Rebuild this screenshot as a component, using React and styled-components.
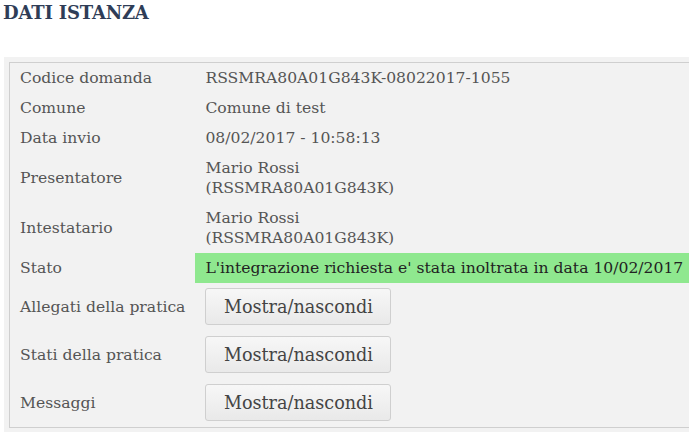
import styled, { createGlobalStyle } from 'styled-components';

const Global = createGlobalStyle`
    body {
        margin: 0;
        background: #fff;
        font-family: "DejaVu Serif", "Liberation Serif", serif;
        overflow: hidden;
    }
`;

const Page = styled.div`
    padding: 2px 0 0 3px;
    width: 689px;
    overflow: hidden;
`;

const Title = styled.h2`
    margin: 0;
    font-size: 18px;
    line-height: 22px;
    font-weight: bold;
    color: #2f3d57;
    letter-spacing: -0.2px;
`;

const Panel = styled.div`
    margin-top: 33px;
    margin-left: 1px;
    margin-right: -60px;
    background: #f2f2f2;
    padding: 5px 0 4px 5px;
`;

const Table = styled.table`
    border-collapse: collapse;
    border: 1px solid #cfcfcf;
    width: 100%;
    font-size: 15.6px;
    color: #555;
`;

const Label = styled.td`
    width: 165px;
    padding: 5px 10px;
    line-height: 20px;
    vertical-align: middle;
    white-space: nowrap;
`;

const Value = styled.td`
    padding: ${p => (p.$button ? '5px 10px 6px' : '5px 10px')};
    line-height: 20px;
    vertical-align: middle;
    white-space: nowrap;
    background: ${p => (p.$ok ? '#8fe88f' : 'transparent')};
    color: ${p => (p.$ok ? '#222' : '#555')};
`;

const Toggle = styled.button`
    display: block;
    width: 186px;
    height: 37px;
    font-family: inherit;
    font-size: 17.6px;
    color: #444;
    background: linear-gradient(#f7f7f7, #e9e9e9);
    border: 1px solid #cfcfcf;
    border-radius: 3px;
    padding: 0;
`;

const rows = [
    ['Codice domanda', ['RSSMRA80A01G843K-08022017-1055']],
    ['Comune', ['Comune di test']],
    ['Data invio', ['08/02/2017 - 10:58:13']],
    ['Presentatore', ['Mario Rossi', '(RSSMRA80A01G843K)']],
    ['Intestatario', ['Mario Rossi', '(RSSMRA80A01G843K)']],
];

const toggles = ['Allegati della pratica', 'Stati della pratica', 'Messaggi'];

export default function App() {
    return (
        <Page>
            <Global />
            <Title>DATI ISTANZA</Title>
            <Panel>
                <Table>
                    <tbody>
                        {rows.map(([label, lines]) => (
                            <tr key={label}>
                                <Label>{label}</Label>
                                <Value>
                                    {lines.map((l, i) => (
                                        <div key={i}>{l}</div>
                                    ))}
                                </Value>
                            </tr>
                        ))}
                        <tr>
                            <Label>Stato</Label>
                            <Value $ok>L'integrazione richiesta e' stata inoltrata in data 10/02/2017</Value>
                        </tr>
                        {toggles.map(t => (
                            <tr key={t}>
                                <Label>{t}</Label>
                                <Value $button>
                                    <Toggle type="button">Mostra/nascondi</Toggle>
                                </Value>
                            </tr>
                        ))}
                    </tbody>
                </Table>
            </Panel>
        </Page>
    );
}
